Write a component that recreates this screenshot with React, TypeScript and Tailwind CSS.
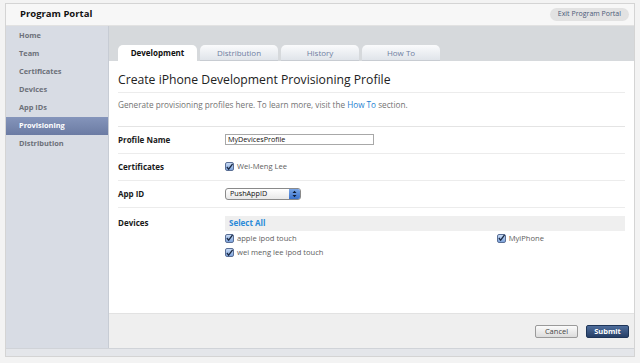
import { useState } from "react";

const navItems = ["Home", "Team", "Certificates", "Devices", "App IDs", "Provisioning", "Distribution"];
const tabs = ["Development", "Distribution", "History", "How To"];

function Check({ label }: { label: string }) {
  return (
    <label className="flex items-center gap-[3px] text-[7.6px] text-[#5e5e5e]">
      <span className="w-[9px] h-[9px] rounded-[2px] border border-[#5a6f96] bg-gradient-to-b from-[#c9dbf5] to-[#7ea4dc] flex items-center justify-center">
        <svg width="8" height="8" viewBox="0 0 8 8">
          <path d="M1 4 L3 6.5 L7.5 0.5" stroke="#1b2a44" strokeWidth="1.4" fill="none" />
        </svg>
      </span>
      {label}
    </label>
  );
}

function Row({ label, children }: { label: string; children: React.ReactNode }) {
  return (
    <div className="flex items-center h-[27px] border-b border-[#ececec]">
      <div className="w-[107px] shrink-0 text-[8px] font-bold text-[#1a1a1a]">{label}</div>
      <div className="flex-1">{children}</div>
    </div>
  );
}

export default function App() {
  const [active] = useState(0);

  return (
    <div className="w-[640px] h-[363px] bg-[#f3f3f3] pt-[3px] pl-[5px] font-['Open_Sans',sans-serif]">
      <div className="w-[630px] border border-[#d4d4d4] bg-white">
        <div className="h-[22px] flex items-center justify-between px-[14px] bg-[#f7f7f7] border-b border-[#e2e2e2]">
          <span className="text-[9.5px] font-bold text-[#111]">Program Portal</span>
          <span className="text-[7px] text-[#4a5a78] bg-[#e2e2e2] rounded-full px-[8px] py-[1px] -mr-[9px]">
            Exit Program Portal
          </span>
        </div>
        <div className="flex h-[322px]">
          <div className="w-[103px] shrink-0 bg-[#d8dce4] border-r border-[#c7ccd4] pt-[1px]">
            {navItems.map((item) => (
              <div
                key={item}
                className={`h-[18px] flex items-center pl-[13px] text-[7.4px] font-bold ${
                  item === "Provisioning"
                    ? "bg-gradient-to-b from-[#8595bb] to-[#6b7ba3] text-white"
                    : "text-[#6c7079]"
                }`}
              >
                {item}
              </div>
            ))}
          </div>
          <div className="flex-1 flex flex-col bg-[#d6d9dc]">
            <div className="flex gap-[3px] pl-[9px] pt-[19px]">
              {tabs.map((tab, i) => (
                <div
                  key={tab}
                  className={`w-[78px] h-[16px] rounded-t-[5px] flex items-center justify-center text-[8px] ${
                    i === active
                      ? "bg-white font-bold text-[#111] w-[79px]"
                      : "bg-gradient-to-b from-[#fafbfc] to-[#e0e4ea] text-[#6f80a2] border-b border-[#c8ccd2]"
                  }`}
                >
                  {tab}
                </div>
              ))}
            </div>
            <div className="h-[252px] bg-white px-[9px] pt-[10px]">
              <div className="text-[12.2px] text-[#222] pb-[3px] border-b border-[#ececec]">
                Create iPhone Development Provisioning Profile
              </div>
              <div className="text-[8.2px] text-[#737373] pt-[6px] pb-[14px] border-b border-[#e4e4e4]">
                Generate provisioning profiles here. To learn more, visit the{" "}
                <span className="text-[#1f7fd0]">How To</span> section.
              </div>
              <Row label="Profile Name">
                <div className="w-[149px] h-[11px] border border-[#a8a8a8] text-[7.2px] text-[#111] pl-[2px] leading-[9px]">
                  MyDevicesProfile
                </div>
              </Row>
              <Row label="Certificates">
                <Check label="Wei-Meng Lee" />
              </Row>
              <Row label="App ID">
                <div className="w-[76px] h-[12px] rounded-[3px] border border-[#8a8a8a] bg-gradient-to-b from-white to-[#e8e8e8] flex items-center justify-between pl-[4px] text-[7.2px] text-[#111] overflow-hidden">
                  PushAppID
                  <span className="w-[11px] h-full bg-gradient-to-b from-[#7aa6e6] to-[#3a72cc] flex items-center justify-center">
                    <svg width="5" height="8" viewBox="0 0 5 8">
                      <path d="M0.5 3 L2.5 0.8 L4.5 3 Z M0.5 5 L2.5 7.2 L4.5 5 Z" fill="#0d1a33" />
                    </svg>
                  </span>
                </div>
              </Row>
              <div className="flex pt-[8px]">
                <div className="w-[107px] shrink-0 text-[8px] font-bold text-[#1a1a1a] pt-[1px]">Devices</div>
                <div className="flex-1">
                  <div className="h-[15px] bg-[#efefef] flex items-center pl-[4px] text-[8px] font-bold text-[#2a8ad8]">
                    Select All
                  </div>
                  <div className="flex justify-between pt-[2px] pr-[81px]">
                    <div className="flex flex-col gap-[3px]">
                      <Check label="apple ipod touch" />
                      <Check label="wei meng lee ipod touch" />
                    </div>
                    <div>
                      <Check label="MyiPhone" />
                    </div>
                  </div>
                </div>
              </div>
            </div>
            <div className="flex-1 bg-[#efefef] border-t border-[#e2e2e2] flex items-center justify-end gap-[8px] pr-[5px]">
              <button className="w-[43px] h-[13px] rounded-[2px] border border-[#9a9a9a] bg-gradient-to-b from-[#fbfbfb] to-[#dcdcdc] text-[7.5px] text-[#444]">
                Cancel
              </button>
              <button className="w-[43px] h-[13px] rounded-[2px] border border-[#1e3558] bg-gradient-to-b from-[#4e6d9c] to-[#273f66] text-[7.5px] font-bold text-white">
                Submit
              </button>
            </div>
          </div>
        </div>
        <div className="h-[8px] bg-[#e4e6ea] border-t border-[#d0d3d8]"></div>
      </div>
    </div>
  );
}
